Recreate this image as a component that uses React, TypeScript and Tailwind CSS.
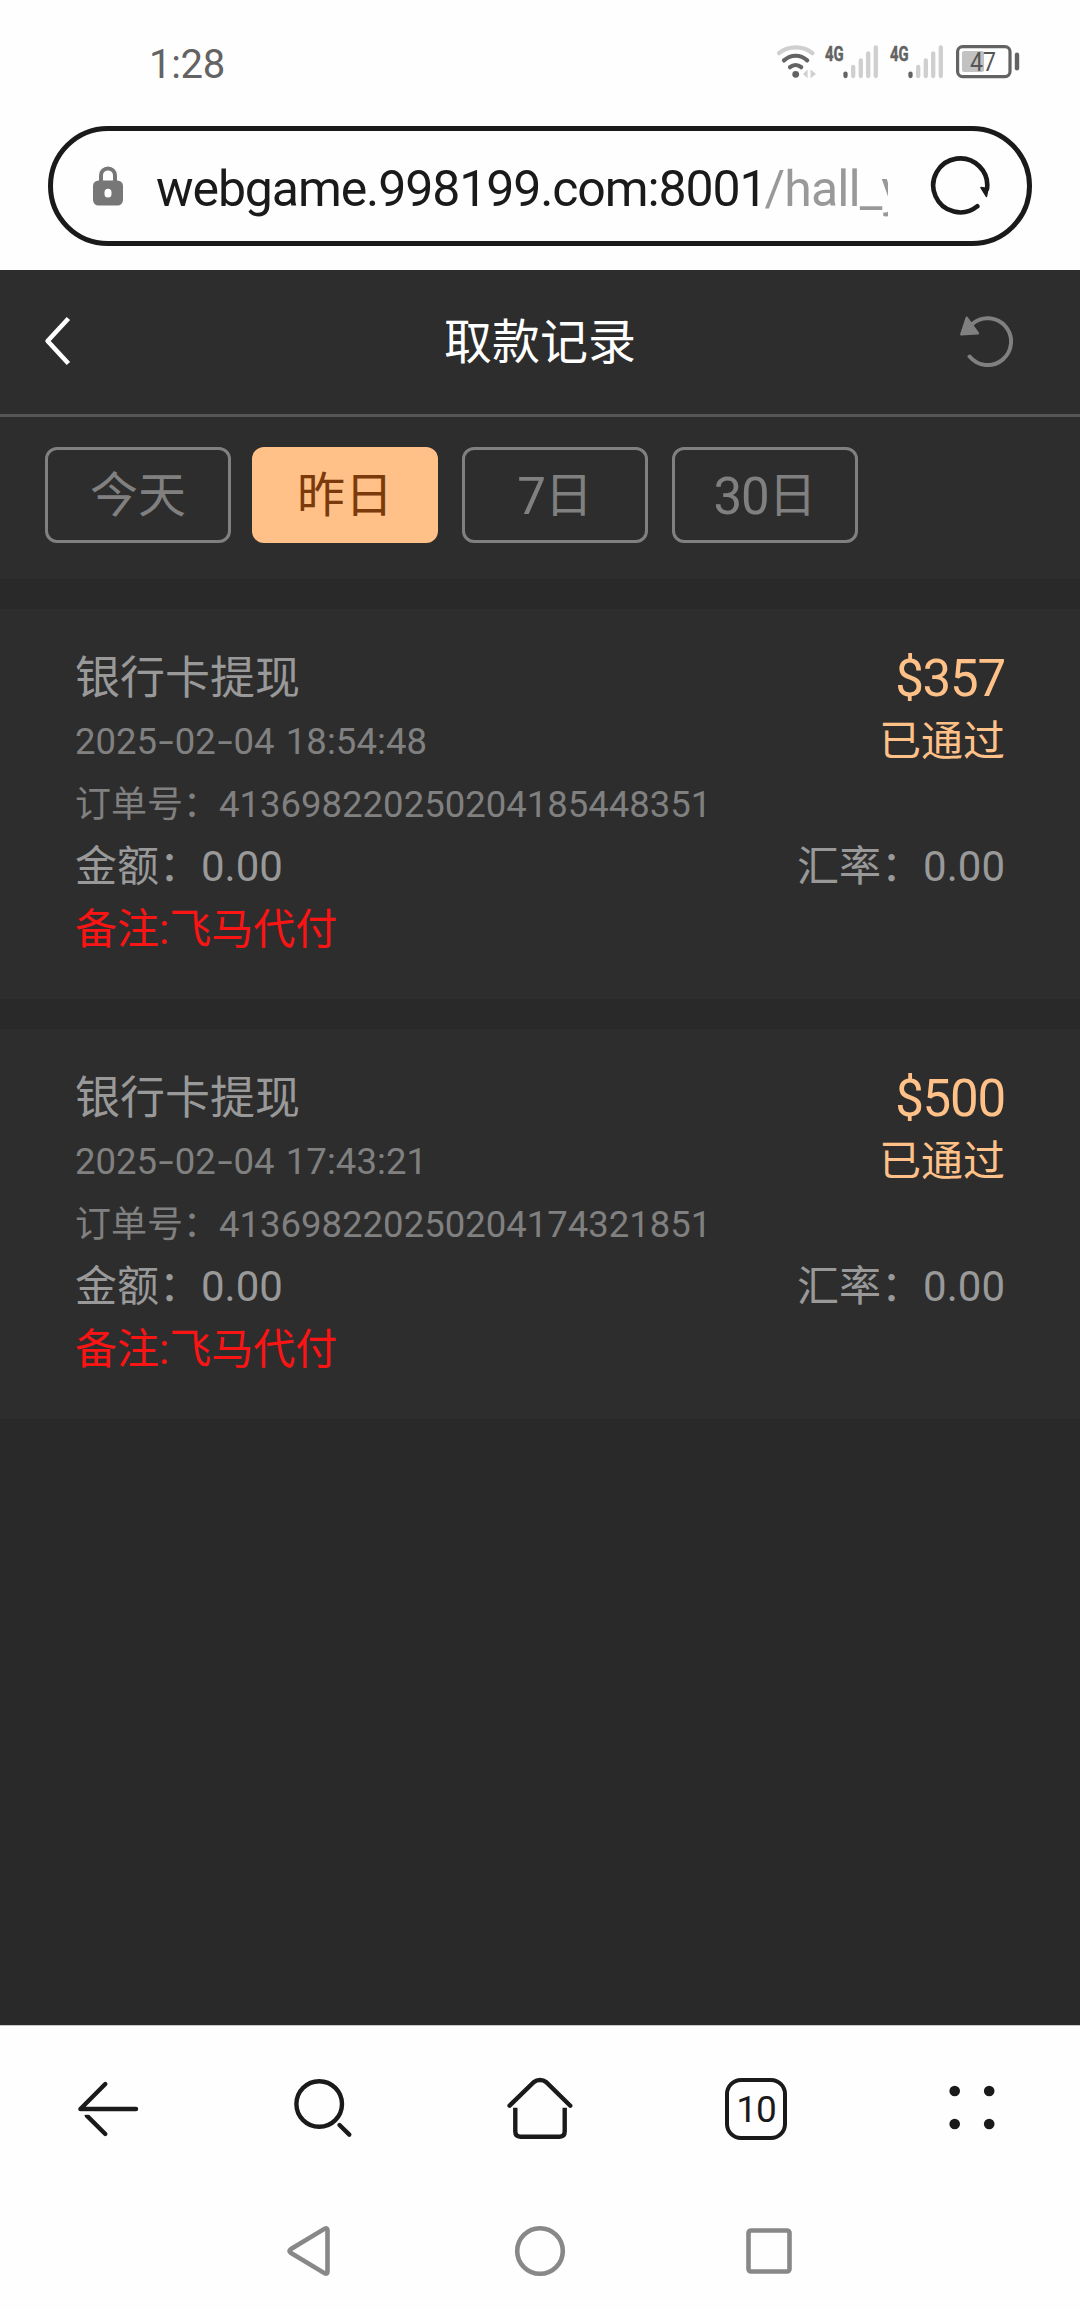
import { useState } from "react";

const ranges = [
  { num: "", label: "今天", gap: "" },
  { num: "", label: "昨日", gap: "ml-[21px]" },
  { num: "7", label: "日", gap: "ml-6" },
  { num: "30", label: "日", gap: "ml-6" },
];

const records = [
  {
    title: "银行卡提现",
    time: "2025-02-04 18:54:48",
    order: "413698220250204185448351",
    amount: "$357",
    status: "已通过",
    value: "0.00",
    rate: "0.00",
    remark: "飞马代付",
  },
  {
    title: "银行卡提现",
    time: "2025-02-04 17:43:21",
    order: "413698220250204174321851",
    amount: "$500",
    status: "已通过",
    value: "0.00",
    rate: "0.00",
    remark: "飞马代付",
  },
];

function WifiIcon() {
  return (
    <svg width="40" height="36" viewBox="0 0 40 36" fill="none" strokeLinecap="round" strokeWidth="4.2">
      <path d="M3 10.2C12.5 2.4 27 2.4 36.4 10.2" stroke="#cfcfcf" />
      <path d="M8 17.4C15 11.2 24.4 11.2 31.2 17.4" stroke="#636363" />
      <path d="M14 24.2C17.3 21.4 22 21.4 25.2 24.2" stroke="#636363" />
      <circle cx="19.7" cy="31.3" r="3.4" fill="#636363" />
      <path d="M27 31L31.6 26.4V35.2ZM34.6 26.4L40 31L34.6 35.2Z" fill="#cfcfcf" />
    </svg>
  );
}

function SignalIcon() {
  return (
    <svg className="overflow-visible" width="54" height="36" viewBox="0 0 54 36" strokeLinecap="round" strokeWidth="4.3">
      <text
        x="0"
        y="18"
        fontSize="20.5"
        fontWeight="700"
        fill="#636363"
        stroke="#636363"
        strokeWidth="0.5"
        textLength="18.6"
        lengthAdjust="spacingAndGlyphs"
      >
        4G
      </text>
      <path d="M20.5 30.6V33" stroke="#636363" />
      <path d="M28.2 24V33M35.8 17.4V33M43.2 10.4V33M50.8 4.4V33" stroke="#cfcfcf" />
    </svg>
  );
}

function BatteryIcon() {
  return (
    <svg width="64" height="36" viewBox="0 0 64 36" fill="none">
      <rect x="1.6" y="3.6" width="52.4" height="30" rx="5" stroke="#636363" strokeWidth="3.2" />
      <rect x="6" y="8" width="22" height="21" rx="2" fill="#c2c2c2" />
      <path d="M61 11.8V25.2" stroke="#636363" strokeWidth="4.4" strokeLinecap="round" />
      <text x="14" y="28" fontSize="25" fill="#555555" textLength="26" lengthAdjust="spacingAndGlyphs">
        47
      </text>
    </svg>
  );
}

function LockIcon() {
  return (
    <svg width="30" height="40" viewBox="0 0 30 40" fill="none">
      <path d="M8 15.5V9.4a7 7 0 0 1 14 0v6.1" stroke="#777777" strokeWidth="4" />
      <rect y="14.5" width="30" height="25" rx="5.5" fill="#777777" />
      <rect x="11.5" y="22.8" width="7" height="8.6" rx="3.5" fill="#fff" />
    </svg>
  );
}

function ReloadIcon() {
  return (
    <svg width="60" height="60" viewBox="0 0 60 60" fill="none">
      <path d="M47.3 50.3A27 27 0 1 1 57 33" stroke="#1a1a1a" strokeWidth="4.6" strokeLinecap="round" />
      <path d="M51 31.6L58 32.5L56.4 40.4Z" fill="#1a1a1a" stroke="#1a1a1a" strokeWidth="1.6" strokeLinejoin="round" />
    </svg>
  );
}

function UndoIcon() {
  return (
    <svg width="54" height="54" viewBox="0 0 54 54" fill="none">
      <path d="M10.6 41.5A23.4 23.4 0 1 0 13.5 8.8" stroke="#808080" strokeWidth="4" strokeLinecap="round" />
      <path d="M7.7 2.8L2.3 19.3L18.9 18.3Z" fill="#808080" stroke="#808080" strokeWidth="2.4" strokeLinejoin="round" />
    </svg>
  );
}

function StatusBar() {
  return (
    <div className="flex h-[126px] items-start justify-between pl-[149px] pr-[60px] pt-[43px]">
      <span className="mt-[-2px] text-[40px] leading-[48px] tracking-[-0.3px] text-[#636363]">1:28</span>
      <div className="flex">
        <WifiIcon />
        <div className="ml-[9px] flex gap-[11px]">
          <SignalIcon />
          <SignalIcon />
        </div>
        <div className="ml-[12px]">
          <BatteryIcon />
        </div>
      </div>
    </div>
  );
}

function AddressBar() {
  return (
    <div className="mx-12 mb-6 flex h-[120px] items-center rounded-full border-[5px] border-[#1a1a1a] pl-10 pr-[37px]">
      <LockIcon />
      <div className="ml-[33px] w-[732px] overflow-hidden whitespace-nowrap pt-[5px] text-[50px] leading-[70px] tracking-[-1.1px] text-[#1a1a1a]">
        webgame.998199.com:8001
        <span className="ml-[-2px] tracking-[-0.9px] text-[#999999]">/hall_y</span>
      </div>
      <div className="ml-auto">
        <ReloadIcon />
      </div>
    </div>
  );
}

function BrowserBar() {
  return (
    <div className="flex h-[170px] items-center justify-between border-t border-[#c8c8c8] px-[72px] pb-[3px]">
      <svg width="72" height="72" viewBox="0 0 72 72" fill="none" stroke="#1a1a1a" strokeWidth="4.4" strokeLinecap="round">
        <path d="M64 36H8.4L33.3 11" strokeLinejoin="round" />
        <path d="M33.3 61L14.8 42.6" />
        <path d="M7 40.3H22" stroke="#fff" strokeWidth="3" strokeLinecap="butt" />
      </svg>
      <svg width="72" height="72" viewBox="0 0 72 72" fill="none" stroke="#1a1a1a" strokeWidth="4.4" strokeLinecap="round">
        <circle cx="31.2" cy="31" r="22.8" />
        <path d="M51.5 52L61.3 61.6" />
      </svg>
      <svg width="72" height="72" viewBox="0 0 72 72" fill="none" stroke="#1a1a1a" strokeWidth="4.4" strokeLinecap="round">
        <path d="M5.6 32.7L30 9Q32.4 7 36 7T42 9L66.3 32.7" />
        <path d="M11.3 34.8V58.6Q11.3 63.7 16.4 63.7H55.6Q60.7 63.7 60.7 58.6V34.8" strokeLinecap="butt" />
      </svg>
      <div className="mx-[5px] flex h-[62px] w-[62px] items-center justify-center rounded-[16px] border-[4.4px] border-[#1a1a1a] text-[37px] leading-none tracking-[-1px] text-[#1a1a1a]">
        10
      </div>
      <svg width="72" height="72" viewBox="0 0 72 72" fill="#1a1a1a">
        <circle cx="18.7" cy="18" r="5.3" />
        <circle cx="53.2" cy="18" r="5.3" />
        <circle cx="18.7" cy="51" r="5.3" />
        <circle cx="53.2" cy="51" r="5.3" />
      </svg>
    </div>
  );
}

function SystemNav() {
  return (
    <div className="flex h-[115px] justify-center gap-[178px] pt-[30px]">
      <svg width="52" height="52" viewBox="0 0 52 52" fill="none" stroke="#888888" strokeWidth="4.6" strokeLinejoin="round">
        <path d="M6.6 24.3Q4.4 26 6.6 27.7L40.8 48.4Q43.5 49.2 43.5 46.4V5.6Q43.5 2.8 40.8 3.6Z" />
      </svg>
      <svg width="52" height="52" viewBox="0 0 52 52" fill="none" stroke="#888888" strokeWidth="4.6">
        <circle cx="26" cy="26" r="22.8" />
      </svg>
      <svg width="52" height="52" viewBox="0 0 52 52" fill="none" stroke="#888888" strokeWidth="4.6">
        <rect x="4.5" y="5.5" width="41" height="41" rx="2.5" />
      </svg>
    </div>
  );
}

// date with wider dashes than the font's own
function DateTime({ value }: { value: string }) {
  const [date, time] = value.split(" ");
  return (
    <span className="text-[36.5px] text-[#808080]">
      {date.split("-").map((part, i) => (
        <span key={i}>
          {i > 0 && <span className="mx-[3.8px] inline-block scale-x-150">-</span>}
          {part}
        </span>
      ))}
      <span className="ml-[2px] tracking-[0.1px]"> {time}</span>
    </span>
  );
}

function RecordCard({ record }: { record: (typeof records)[number] }) {
  return (
    <div className="mt-[30px] h-[390px] bg-[#2d2d2d] px-[75px] pt-[38px] text-[42px] leading-[63px] text-[#999999]">
      <div className="flex h-[63px] justify-between">
        <span className="text-[45px]">{record.title}</span>
        <span className="text-[51px] tracking-[-1.2px] text-[#ffc188]">{record.amount}</span>
      </div>
      <div className="flex h-[63px] justify-between">
        <DateTime value={record.time} />
        <span className="text-[#ffc188]">{record.status}</span>
      </div>
      <div className="h-[62px] text-[36px] text-[#808080]">
        订单号：<span className="text-[36.5px]">{record.order}</span>
      </div>
      <div className="flex h-[63px] justify-between">
        <span>金额：{record.value}</span>
        <span>汇率：{record.rate}</span>
      </div>
      <div className="h-[63px] text-[#fb1414]">备注:{record.remark}</div>
    </div>
  );
}

export default function App() {
  const [active, setActive] = useState(1);

  return (
    <div className="flex h-[2310px] w-[1080px] flex-col overflow-hidden bg-[#fefefe] font-['Roboto','Noto_Sans_CJK_SC',sans-serif]">
      <StatusBar />
      <AddressBar />

      <main className="flex-1 bg-[#292929]">
        <header className="flex h-[147px] items-center justify-between border-b-[3px] border-[#555555] bg-[#2d2d2d] pl-[43px] pr-[67px]">
          <svg width="54" height="54" viewBox="0 0 54 54" fill="none" stroke="#fff" strokeWidth="4.6">
            <path d="M25.4 3.5L4.6 26L25.4 48.5" strokeLinejoin="round" />
          </svg>
          <h1 className="ml-[24px] pt-[2px] text-[48px] text-white">取款记录</h1>
          <UndoIcon />
        </header>

        <div className="flex h-[162px] bg-[#2d2d2d] pl-[45px] pt-[30px]">
          {ranges.map((range, i) => (
            <button
              key={i}
              onClick={() => setActive(i)}
              className={`flex h-24 w-[186px] items-center justify-center rounded-xl pt-[2px] text-[48px] leading-none ${range.gap} ${
                i === active ? "bg-[#ffc188] text-[#7a3a0c]" : "border-[3px] border-[#808080] text-[#808080]"
              }`}
            >
              <span className="text-[51px] tracking-[-1.2px]">{range.num}</span>
              {range.label}
            </button>
          ))}
        </div>

        {records.map((record) => (
          <RecordCard key={record.order} record={record} />
        ))}
      </main>

      <BrowserBar />
      <SystemNav />
    </div>
  );
}
